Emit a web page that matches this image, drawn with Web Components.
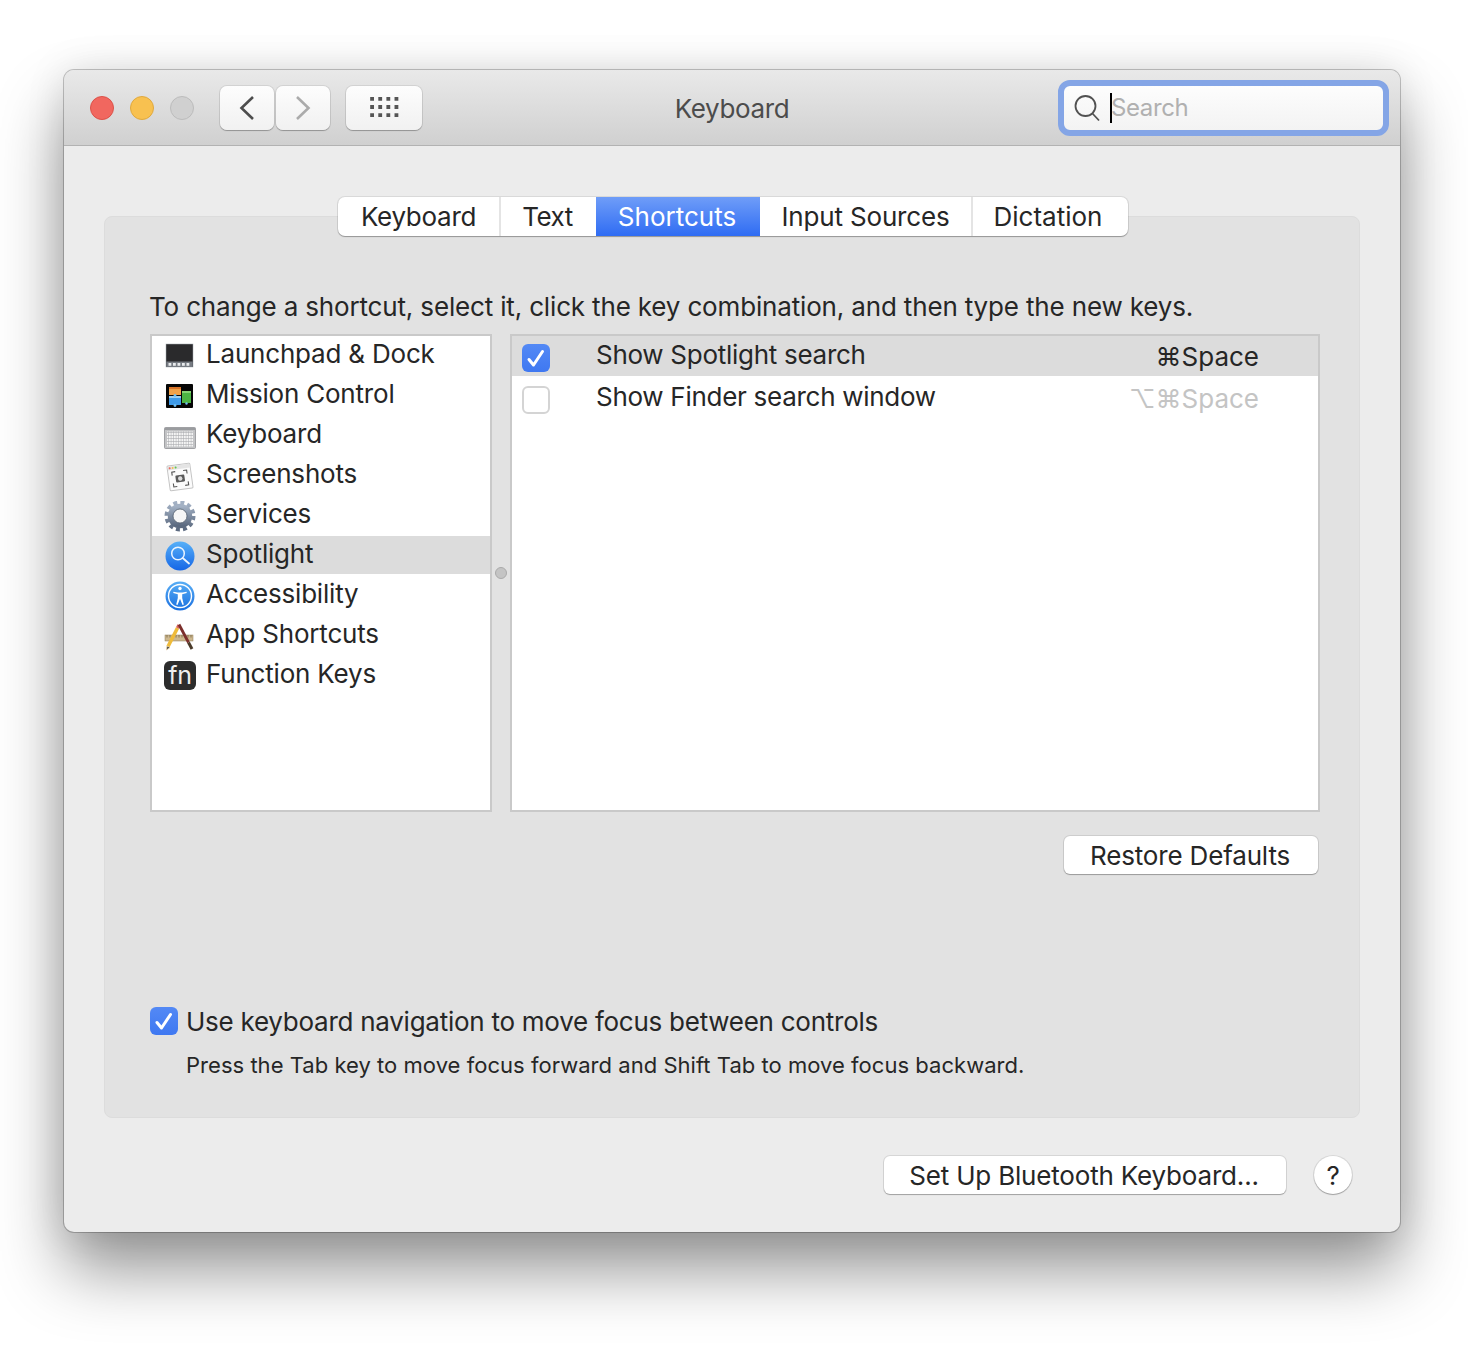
<!DOCTYPE html>
<html lang="en">
<head>
<meta charset="utf-8">
<title>Keyboard</title>
<style>
    html, body { margin: 0; background: #fff; }
    body {
        width: 1468px;
        height: 1348px;
        overflow: hidden;
        font-family: Inter, "Liberation Sans", sans-serif;
        font-size: 26px;
        letter-spacing: -0.16px;
        color: #262626;
    }
</style>
</head>
<body>
<prefs-page></prefs-page>
<script>
const ICONS = {
    launchpad: `<svg viewBox="0 0 32 32" width="32" height="32">
        <rect x="2" y="3" width="27" height="23" fill="#2a2a2c" stroke="#a5aab0" stroke-width=".5"/>
        <rect x="2.300" y="20.500" width="26.400" height="5.500" fill="#767b82"/>
        <g fill="#e8eaec"><rect x="4.500" y="22" width="2.800" height="2.800"/><rect x="9" y="22" width="2.800" height="2.800"/><rect x="13.500" y="22" width="2.800" height="2.800"/><rect x="18" y="22" width="2.800" height="2.800"/><rect x="22.500" y="22" width="2.800" height="2.800"/></g>
    </svg>`,
    mission: `<svg viewBox="0 0 32 32" width="32" height="32">
        <rect x="2" y="3" width="27" height="24" rx="1" fill="#060606"/>
        <rect x="5" y="6" width="12" height="8" fill="#f0a24a"/><rect x="5" y="6" width="12" height="2" fill="#d9752a"/>
        <rect x="5" y="15" width="12" height="9" fill="#3f9be8"/><rect x="5" y="15" width="12" height="2" fill="#9ad0f5"/>
        <rect x="18" y="10" width="9" height="12" fill="#4cb544"/><rect x="18" y="10" width="9" height="2" fill="#86d474"/>
        <circle cx="11" cy="14.500" r="1.400" fill="#6dbdf0"/><circle cx="11" cy="24.500" r="1.400" fill="#6dbdf0"/><circle cx="22.500" cy="22.500" r="1.200" fill="#6dbdf0"/>
    </svg>`,
    keyboard: `<svg viewBox="0 0 32 32" width="32" height="32">
        <defs><pattern id="k" width="2.500" height="3" patternUnits="userSpaceOnUse"><rect width="2.500" height="3" fill="#a9abae"/><rect width="2" height="2.400" fill="#f4f4f4"/></pattern></defs>
        <rect x="0.500" y="6.500" width="31" height="21" rx="1" fill="#c2c3c5" stroke="#8f9194" stroke-width=".8"/>
        <rect x="1" y="7" width="30" height="2" fill="#9a9c9f"/>
        <rect x="3" y="10.500" width="26" height="15" fill="url(#k)"/>
    </svg>`,
    screenshots: `<svg viewBox="0 0 32 32" width="32" height="32">
        <g transform="rotate(-8 16 16)">
            <rect x="4.500" y="3.500" width="23" height="25" rx="1" fill="#fbfbfb" stroke="#c4c4c4" stroke-width="1"/>
            <rect x="5" y="4" width="22" height="4" fill="#e4e4e4"/>
            <circle cx="7" cy="6" r="1" fill="#ec6a5e"/><circle cx="10" cy="6" r="1" fill="#f5bf4f"/><circle cx="13" cy="6" r="1" fill="#61c554"/>
            <path d="M8.500 13.500v-3.500h3.500M20 10h3.500v3.500M23.500 21.500v3.500h-3.500M12 25H8.500v-3.500" fill="none" stroke="#555" stroke-width="1.100"/>
            <rect x="11.500" y="14" width="9" height="7" rx="1" fill="#5a5a5a"/><circle cx="16" cy="17.500" r="2.200" fill="#ddd"/>
        </g>
    </svg>`,
    services: `<svg viewBox="0 0 32 32" width="32" height="32">
        <defs><linearGradient id="g" x1="0" y1="0" x2="0" y2="1"><stop offset="0" stop-color="#a3b1c4"/><stop offset="1" stop-color="#5c6a80"/></linearGradient></defs>
        <circle cx="16" cy="15" r="13" fill="none" stroke="url(#g)" stroke-width="5" stroke-dasharray="3.800 3"/>
        <circle cx="16" cy="15" r="9.500" fill="none" stroke="url(#g)" stroke-width="5.500"/>
        <circle cx="16" cy="15" r="7" fill="#f6f6f6" stroke="#4e5a6b" stroke-width=".8"/>
    </svg>`,
    spotlight: `<svg viewBox="0 0 32 32" width="32" height="32">
        <defs><linearGradient id="s" x1="0" y1="0" x2="0" y2="1"><stop offset="0" stop-color="#57b0f8"/><stop offset="1" stop-color="#1566e6"/></linearGradient></defs>
        <circle cx="16" cy="15" r="14.500" fill="url(#s)"/>
        <circle cx="14" cy="12.500" r="6.300" fill="none" stroke="#eaf4ff" stroke-width="1.500"/>
        <path d="M18.700 17L25 22.500" stroke="#eaf4ff" stroke-width="1.800" stroke-linecap="round"/>
    </svg>`,
    accessibility: `<svg viewBox="0 0 32 32" width="32" height="32">
        <defs><linearGradient id="a" x1="0" y1="0" x2="0" y2="1"><stop offset="0" stop-color="#58aef5"/><stop offset="1" stop-color="#1a6fe0"/></linearGradient></defs>
        <circle cx="16" cy="15" r="14.500" fill="url(#a)"/>
        <circle cx="16" cy="15" r="11.500" fill="none" stroke="#fff" stroke-width="1.400"/>
        <circle cx="16" cy="7.500" r="1.700" fill="#fff"/>
        <path d="M9.500 10.800L13.500 11.400H18.500L22.500 10.800L22.800 12L18.200 13.200V17L19.800 23.600L18.500 24L16 17.800L13.500 24L12.200 23.600L13.800 17V13.200L9.200 12Z" fill="#fff"/>
    </svg>`,
    apps: `<svg viewBox="0 0 32 32" width="32" height="32">
        <rect x="1" y="14" width="28" height="6" fill="#cdb88f" stroke="#8e7b58" stroke-width=".5"/>
        <path d="M3 14v2.500M6 14v2.500M9 14v2.500M12 14v2.500M15 14v2.500M18 14v2.500M21 14v2.500M24 14v2.500M27 14v2.500" stroke="#6b5a3d" stroke-width=".7"/>
        <path d="M13.500 7L4 25.500" stroke="#efbb3a" stroke-width="3.600"/>
        <path d="M13.500 7L15 4" stroke="#d8615a" stroke-width="3.400"/>
        <path d="M3 25L2.500 29L6 26.500Z" fill="#333" stroke="#e8d3a8" stroke-width=".8"/>
        <path d="M15 3.500L24.500 21.500" stroke="#7c2f2c" stroke-width="2.800"/>
        <path d="M24.500 21.500L28 28" stroke="#4a3a2a" stroke-width="3"/>
    </svg>`
}

class MacIconButton extends HTMLElement {
    constructor() {
        super()
        this.attachShadow({mode: 'open'}).innerHTML = `
        <style>
            :host {
                display: flex;
                align-items: center;
                justify-content: center;
                height: 44px;
                box-sizing: border-box;
                background: linear-gradient(#fdfdfd, #f1f1f1);
                border-radius: 7px;
                box-shadow: 0 0 0 1px rgba(0, 0, 0, .08), 0 1px 1px rgba(0, 0, 0, .25);
            }
        </style>
        <slot></slot>`
    }
}

class MacTitlebar extends HTMLElement {
    constructor() {
        super()
        this.attachShadow({mode: 'open'}).innerHTML = `
        <style>
            :host {
                display: grid;
                grid-template-columns: 1fr auto 1fr;
                align-items: center;
                height: 76px;
                box-sizing: border-box;
                background: linear-gradient(#e9e9e9, #d0d0d0);
                border-bottom: 1px solid #b2b2b2;
                border-radius: 10px 10px 0 0;
            }
            .left { display: flex; align-items: center; margin-left: 26px; }
            .light {
                width: 24px;
                height: 24px;
                box-sizing: border-box;
                border-radius: 50%;
                margin-right: 16px;
                border: 1px solid;
            }
            .close { background: #f1675f; border-color: #dc5249; }
            .min { background: #f8c150; border-color: #e0a93e; }
            .max { background: #d0d0d0; border-color: #bcbcbc; }
            .nav { display: flex; gap: 2px; margin-left: 10px; margin-right: 16px; }
            mac-icon-button.half { width: 54px; }
            mac-icon-button.grid { width: 76px; }
            .title { color: #4c4c4c; font-size: 26px; letter-spacing: -0.37px; position: relative; top: 1px; }
            .search {
                justify-self: end;
                width: 331px;
                height: 56px;
                margin-right: 11px;
                box-sizing: border-box;
                border: 6px solid #84a5e6;
                border-radius: 12px;
                background: linear-gradient(#fdfdfd, #f3f3f3);
                display: flex;
                align-items: center;
                padding-left: 10px;
                color: #b0b0b0;
                font-size: 24px;
                letter-spacing: -0.4px;
            }
            .caret { width: 2px; height: 30px; background: #000; margin: 0 0 0 10px; }
            .search span { margin-left: -1px; }
            svg { display: block; }
        </style>
        <div class="left">
            <div class="light close"></div>
            <div class="light min"></div>
            <div class="light max"></div>
            <div class="nav">
                <mac-icon-button class="half"><svg width="16" height="26" viewBox="0 0 16 26"><path d="M14 2L2.500 13L14 24" fill="none" stroke="#4d4d4d" stroke-width="2.600"/></svg></mac-icon-button>
                <mac-icon-button class="half"><svg width="16" height="26" viewBox="0 0 16 26"><path d="M2 2L13.500 13L2 24" fill="none" stroke="#ababab" stroke-width="2.600"/></svg></mac-icon-button>
            </div>
            <mac-icon-button class="grid"><svg width="29" height="21" viewBox="0 0 30 22" fill="#555"><path d="M0 0h4v4H0zM8.500 0h4v4h-4zM17 0h4v4h-4zM25.500 0h4v4h-4zM0 8.500h4v4H0zM8.500 8.500h4v4h-4zM17 8.500h4v4h-4zM25.500 8.500h4v4h-4zM0 17h4v4H0zM8.500 17h4v4h-4zM17 17h4v4h-4zM25.500 17h4v4h-4z"/></svg></mac-icon-button>
        </div>
        <div class="title"><slot></slot></div>
        <div class="search">
            <svg width="26" height="28" viewBox="0 0 26 28"><circle cx="11.500" cy="12" r="10" fill="none" stroke="#515151" stroke-width="1.800"/><path d="M18.500 19.500L25 26.500" stroke="#515151" stroke-width="1.800"/></svg>
            <div class="caret"></div><span>Search</span>
        </div>`
    }
}

class MacTabs extends HTMLElement {
    constructor() {
        super()
        this.attachShadow({mode: 'open'}).innerHTML = `
        <style>
            :host {
                display: flex;
                align-self: center;
                height: 39px;
                margin-top: -20px;
                margin-left: -4px;
                background: #fff;
                border-radius: 7px;
                box-shadow: 0 0 0 1px rgba(0, 0, 0, .08), 0 1px 1px rgba(0, 0, 0, .28);
                overflow: hidden;
            }
        </style>
        <slot></slot>`
    }
}

class MacTab extends HTMLElement {
    constructor() {
        super()
        this.attachShadow({mode: 'open'}).innerHTML = `
        <style>
            :host {
                display: flex;
                align-items: center;
                justify-content: center;
                box-sizing: border-box;
                border-right: 2px solid #e4e4e4;
            }
            :host([selected]) {
                color: #fff;
                background: linear-gradient(#6f9df8, #2f6cf3);
                border-right: 0;
            }
            :host([nosep]) { border-right: 0; }
        </style>
        <slot></slot>`
    }
    connectedCallback() {
        this.style.width = this.getAttribute('w') + 'px'
        this.style.paddingRight = (this.getAttribute('pr') || 0) + 'px'
        this.style.letterSpacing = (this.getAttribute('ls') || -0.16) + 'px'
    }
}

class ListRow extends HTMLElement {
    constructor() {
        super()
        this.attachShadow({mode: 'open'})
    }
    connectedCallback() {
        const icon = this.getAttribute('icon')
        this.shadowRoot.innerHTML = `
        <style>
            :host {
                display: block;
                height: 40px;
                letter-spacing: -0.2px;
            }
            .row {
                display: flex;
                align-items: center;
                gap: 10px;
                height: 38px;
                padding-left: 12px;
            }
            :host([selected]) .row { background: #dcdcdc; }
            .icon { width: 32px; height: 32px; margin-top: 4px; flex: none; }
            svg { display: block; }
            .fn {
                width: 32px;
                height: 29px;
                box-sizing: border-box;
                background: #2c2c2c;
                border-radius: 6px;
                color: #eee;
                font-size: 25px;
                line-height: 29px;
                text-align: center;
            }
            .label { position: relative; top: -2px; }
        </style>
        <div class="row">
            <div class="icon">${icon === 'fn' ? '<div class="fn">fn</div>' : ICONS[icon]}</div>
            <div class="label"><slot></slot></div>
        </div>`
    }
}

class MacCheck extends HTMLElement {
    constructor() {
        super()
        this.attachShadow({mode: 'open'})
    }
    connectedCallback() {
        const on = this.hasAttribute('checked')
        this.shadowRoot.innerHTML = `
        <style>
            :host {
                display: block;
                flex: none;
                width: 28px;
                height: 28px;
                box-sizing: border-box;
                border-radius: 6px;
                background: ${on ? 'linear-gradient(#5389f5, #3f78f1)' : '#fff'};
                ${on ? '' : 'border: 2px solid #d4d4d4;'}
            }
            svg { display: block; }
        </style>
        ${on ? '<svg width="28" height="28" viewBox="0 0 28 28"><path d="M7 15.500L11.500 21L20.500 7.500" fill="none" stroke="#fff" stroke-width="3" stroke-linecap="round" stroke-linejoin="round"/></svg>' : ''}`
    }
}

class ShortcutRow extends HTMLElement {
    constructor() {
        super()
        this.attachShadow({mode: 'open'})
    }
    connectedCallback() {
        const on = this.hasAttribute('selected')
        this.shadowRoot.innerHTML = `
        <style>
            :host {
                display: flex;
                align-items: center;
                height: 40px;
                margin-bottom: 2px;
                padding: 0 59px 0 10px;
            }
            :host([selected]) { background: #dcdcdc; }
            mac-check { margin-top: 4px; }
            .name { margin-left: 46px; flex: 1; position: relative; top: -2px; letter-spacing: -0.28px; }
            .keys { color: ${on ? '#262626' : '#c4c4c4'}; position: relative; top: 0; letter-spacing: 0; }
        </style>
        <mac-check ${on ? 'checked' : ''}></mac-check>
        <div class="name"><slot></slot></div>
        <div class="keys">${this.getAttribute('keys')}</div>`
    }
}

class MacButton extends HTMLElement {
    constructor() {
        super()
        this.attachShadow({mode: 'open'}).innerHTML = `
        <style>
            :host {
                display: flex;
                align-items: center;
                justify-content: center;
                height: 38px;
                box-sizing: border-box;
                padding-right: 2px;
                background: #fff;
                border-radius: 6px;
                box-shadow: 0 0 0 1px rgba(0, 0, 0, .09), 0 1px 1px rgba(0, 0, 0, .25);
            }
            :host([round]) { border-radius: 50%; width: 38px; padding-right: 0; }
        </style>
        <slot></slot>`
    }
}

class PrefsPage extends HTMLElement {
    constructor() {
        super()
        this.attachShadow({mode: 'open'}).innerHTML = `
        <style>
            :host {
                display: block;
                padding: 70px 68px 0 64px;
            }
            .window {
                display: flex;
                flex-direction: column;
                height: 1162px;
                background: #ececec;
                border-radius: 10px;
                box-shadow: 0 0 0 1px rgba(0, 0, 0, .22), 0 38px 66px rgba(0, 0, 0, .42), 0 0 40px rgba(0, 0, 0, .1);
            }
            .content {
                flex: 1;
                display: flex;
                flex-direction: column;
                padding: 70px 40px 0;
            }
            .panel {
                display: flex;
                flex-direction: column;
                height: 902px;
                box-sizing: border-box;
                padding: 0 39px 0 45px;
                background: #e2e2e2;
                border: 1px solid #dcdcdc;
                border-radius: 8px;
            }
            .hint { margin: 55px 0 0 -1px; height: 32px; line-height: 32px; }
            .lists { display: flex; margin-top: 11px; height: 478px; }
            .list {
                box-sizing: border-box;
                background: #fff;
                border: 2px solid #c9c9c9;
                flex: none;
            }
            .left { width: 342px; }
            .right { width: 810px; }
            .splitter { flex: none; width: 18px; display: flex; align-items: center; justify-content: center; }
            .dot { width: 12px; height: 12px; box-sizing: border-box; border-radius: 50%; background: #c4c4c4; border: 1px solid #aaa; }
            .restore { display: flex; justify-content: flex-end; margin: 24px 2px 0 0; }
            .restore mac-button { width: 254px; }
            .nav-opt { display: flex; align-items: center; gap: 8px; margin-top: 133px; height: 28px; letter-spacing: -0.26px; }
            .note { margin: 16px 0 0 36px; font-size: 22px; height: 28px; line-height: 28px; letter-spacing: 0.03px; }
            .footer { display: flex; justify-content: flex-end; gap: 28px; margin: 38px 8px 0 0; letter-spacing: -0.18px; }
            .footer mac-button:first-child { width: 402px; }
        </style>
        <div class="window">
            <mac-titlebar>Keyboard</mac-titlebar>
            <div class="content">
                <div class="panel">
                    <mac-tabs>
                        <mac-tab w="163" ls="-0.28">Keyboard</mac-tab>
                        <mac-tab w="95" nosep pr="2" ls="-0.5">Text</mac-tab>
                        <mac-tab w="164" selected pr="2" ls="0">Shortcuts</mac-tab>
                        <mac-tab w="213">Input Sources</mac-tab>
                        <mac-tab w="155" nosep pr="5" ls="0">Dictation</mac-tab>
                    </mac-tabs>
                    <div class="hint">To change a shortcut, select it, click the key combination, and then type the new keys.</div>
                    <div class="lists">
                        <div class="list left">
                            <list-row icon="launchpad">Launchpad &amp; Dock</list-row>
                            <list-row icon="mission">Mission Control</list-row>
                            <list-row icon="keyboard">Keyboard</list-row>
                            <list-row icon="screenshots">Screenshots</list-row>
                            <list-row icon="services">Services</list-row>
                            <list-row icon="spotlight" selected>Spotlight</list-row>
                            <list-row icon="accessibility">Accessibility</list-row>
                            <list-row icon="apps">App Shortcuts</list-row>
                            <list-row icon="fn">Function Keys</list-row>
                        </div>
                        <div class="splitter"><div class="dot"></div></div>
                        <div class="list right">
                            <shortcut-row selected keys="⌘Space">Show Spotlight search</shortcut-row>
                            <shortcut-row keys="⌥⌘Space">Show Finder search window</shortcut-row>
                        </div>
                    </div>
                    <div class="restore"><mac-button>Restore Defaults</mac-button></div>
                    <div class="nav-opt"><mac-check checked></mac-check><span>Use keyboard navigation to move focus between controls</span></div>
                    <div class="note">Press the Tab key to move focus forward and Shift Tab to move focus backward.</div>
                </div>
                <div class="footer">
                    <mac-button>Set Up Bluetooth Keyboard...</mac-button>
                    <mac-button round>?</mac-button>
                </div>
            </div>
        </div>`
    }
}

customElements.define('mac-icon-button', MacIconButton)
customElements.define('mac-titlebar', MacTitlebar)
customElements.define('mac-tabs', MacTabs)
customElements.define('mac-tab', MacTab)
customElements.define('list-row', ListRow)
customElements.define('mac-check', MacCheck)
customElements.define('shortcut-row', ShortcutRow)
customElements.define('mac-button', MacButton)
customElements.define('prefs-page', PrefsPage)
</script>
</body>
</html>
